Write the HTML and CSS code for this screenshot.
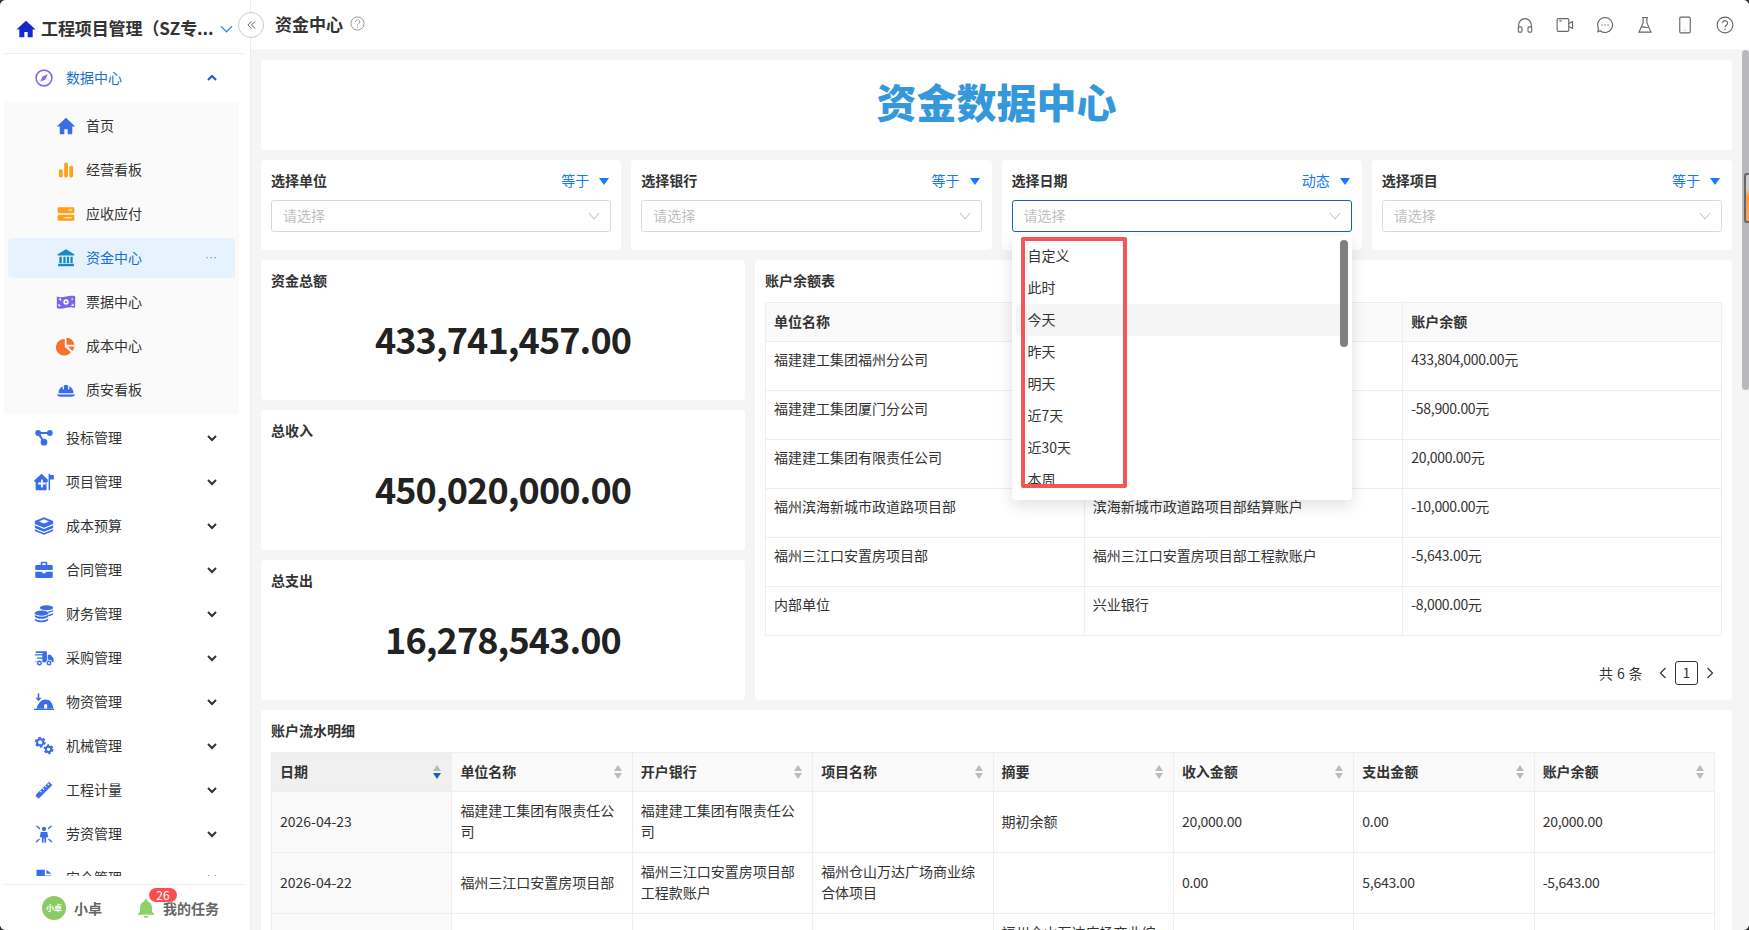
FILE: index.html
```html
<!DOCTYPE html>
<html>
<head>
<meta charset="UTF-8">
<title>资金中心</title>
<link rel="stylesheet" href="styles.css">
</head>
<body>
<div class="app">
	<aside class="sidebar">
		<div class="side-head">
			<svg class="side-logo" viewBox="0 0 24 24"><path d="M12 2 0.500 12.500H4V22h6v-6.500h4V22h6v-9.500h3.500z"/></svg>
			<span class="side-title">工程项目管理（SZ专...</span>
			<svg class="side-down" viewBox="0 0 14 8"><path d="M1 1l6 6 6-6"/></svg>
		</div>
		<nav class="menu">
			<div class="menu-row open">
				<svg class="m-icon" viewBox="0 0 24 24" style="color:#8a6ce6"><circle cx="12" cy="12" r="9.500" fill="none" stroke="currentColor" stroke-width="2"/><path d="M16.500 7.500 13.800 13.800 7.500 16.500 10.200 10.200z"/></svg>
				<span>数据中心</span>
				<svg class="m-chev" viewBox="0 0 12 8"><path d="M2 6l4-4 4 4"/></svg>
			</div>
			<div class="sub-panel">
				<div class="sub-row">
					<svg class="m-icon blue" viewBox="0 0 24 24"><path d="M12 2 1 12.500h3.500V22h5.500v-6h4v6h5.500v-9.500H23z"/></svg>
					<span>首页</span>
				</div>
				<div class="sub-row">
					<svg class="m-icon orange" viewBox="0 0 24 24"><rect x="3.500" y="11" width="4.500" height="10" rx="2"/><rect x="9.800" y="3" width="4.500" height="18" rx="2"/><rect x="16" y="7" width="4.500" height="14" rx="2"/></svg>
					<span>经营看板</span>
				</div>
				<div class="sub-row">
					<svg class="m-icon orange" viewBox="0 0 24 24"><path d="M3.500 4h17A1.500 1.500 0 0 1 22 5.500v4a1.500 1.500 0 0 1-1.500 1.500h-17A1.500 1.500 0 0 1 2 9.500v-4A1.500 1.500 0 0 1 3.500 4zM3.500 13h17a1.500 1.500 0 0 1 1.500 1.500v4a1.500 1.500 0 0 1-1.500 1.500h-17A1.500 1.500 0 0 1 2 18.500v-4A1.500 1.500 0 0 1 3.500 13z"/><path d="M15 7h4M10 16.500h9" stroke="#fff" stroke-width="1.300"/></svg>
					<span>应收应付</span>
				</div>
				<div class="sub-row active">
					<svg class="m-icon" viewBox="0 0 24 24" style="color:#1b8ac4"><path d="M12 1.500 22 7.500v1.500H2V7.500zM4 10.500h3V18H4zM8.800 10.500h2.700V18H8.800zM13 10.500h2.700V18H13zM17.300 10.500H20V18h-2.700zM2.500 19h19v3h-19z"/></svg>
					<span>资金中心</span>
					<span class="more">···</span>
				</div>
				<div class="sub-row">
					<svg class="m-icon" viewBox="0 0 24 24" style="color:#7b66e3"><path d="M1 5.500c4 1.500 7 1 11 0s7-1.500 11-.5v14c-4-1-7-1-11 0s-7 1.500-11 .5z"/><circle cx="12" cy="12" r="3.200" fill="#fff"/><path d="M3.500 8.500h2v2M20.500 8.500h-2M3.500 14.500v2h2M20.500 14v2h-2" fill="none" stroke="#fff" stroke-width="1.300"/><circle cx="12" cy="12" r="1.300"/></svg>
					<span>票据中心</span>
				</div>
				<div class="sub-row">
					<svg class="m-icon" viewBox="0 0 24 24" style="color:#f5712c"><path d="M10.500 3.500V13l7.300 6.600A10 10 0 1 1 10.500 3.500z"/><path d="M12.500 2A9.600 9.600 0 0 1 22 10.500H12.500z"/><path d="M14.500 12.500H22a9.800 9.800 0 0 1-2.500 5.500z"/></svg>
					<span>成本中心</span>
				</div>
				<div class="sub-row">
					<svg class="m-icon blue" viewBox="0 0 24 24"><path d="M3 16c0-4 2-7 5-8.500V11h1.500V6.500c.8-.3 1.700-.5 2.500-.5s1.700.2 2.500.5V11H16V7.500c3 1.500 5 4.500 5 8.500z"/><path d="M1 17.500h22a5 3 0 0 1-4 2.500H5a5 3 0 0 1-4-2.500z"/></svg>
					<span>质安看板</span>
				</div>
			</div>
			<div class="menu-row">
				<svg class="m-icon blue" viewBox="0 0 24 24"><circle cx="5" cy="6" r="3.500"/><circle cx="19" cy="6" r="3.500"/><circle cx="12" cy="17" r="4"/><path d="M5 6h14M5 6l7 11" fill="none" stroke="currentColor" stroke-width="2.500"/></svg>
				<span>投标管理</span>
				<svg class="m-chev" viewBox="0 0 12 8"><path d="M2 2l4 4 4-4"/></svg>
			</div>
			<div class="menu-row">
				<svg class="m-icon blue" viewBox="0 0 24 24"><path d="M9 2 0.500 10v2H2v10h13V12h1.500V9z"/><path d="M8.500 9v3.500H5v2.500h3.500v3.500h2V15H14v-2.500h-3.500V9z" fill="#fff"/><path d="M17.500 2h1.800v1.500h4.500v5.500h-4.500V22h-1.800z"/></svg>
				<span>项目管理</span>
				<svg class="m-chev" viewBox="0 0 12 8"><path d="M2 2l4 4 4-4"/></svg>
			</div>
			<div class="menu-row">
				<svg class="m-icon blue" viewBox="0 0 24 24"><path d="M12 1.500 23 6v3.500L12 14 1 9.500V6z"/><path d="M12 4 6 6.500 12 9l6-2.500z" fill="#fff"/><path d="M1 11l11 4.500L23 11v3.500L12 19 1 14.500zM1 16l11 4.500L23 16v2L12 22.500 1 18z"/></svg>
				<span>成本预算</span>
				<svg class="m-chev" viewBox="0 0 12 8"><path d="M2 2l4 4 4-4"/></svg>
			</div>
			<div class="menu-row">
				<svg class="m-icon blue" viewBox="0 0 24 24"><path d="M8 6V3.500A1.500 1.500 0 0 1 9.500 2h5A1.500 1.500 0 0 1 16 3.500V6h5a1.500 1.500 0 0 1 1.500 1.500V12h-21V7.500A1.500 1.500 0 0 1 3 6zM10 6h4V4h-4zM1.500 14h8.500v2h4v-2h8.500v6a1.500 1.500 0 0 1-1.500 1.500H3A1.500 1.500 0 0 1 1.500 20z"/></svg>
				<span>合同管理</span>
				<svg class="m-chev" viewBox="0 0 12 8"><path d="M2 2l4 4 4-4"/></svg>
			</div>
			<div class="menu-row">
				<svg class="m-icon blue" viewBox="0 0 24 24"><ellipse cx="15" cy="4.500" rx="8" ry="3"/><path d="M17 8.800c2.500-.3 5-1.100 6-2.300v2c-.8 1-3 1.800-6 2.200zM17 12.800c2.500-.3 5-1.100 6-2.300v2c-.8 1-3 1.800-6 2.200z"/><ellipse cx="9" cy="11" rx="8" ry="3.200"/><path d="M1 13c1.500 1.500 4.500 2.300 8 2.300s6.500-.8 8-2.300v2.300c-1 1.500-4.500 2.500-8 2.500s-7-1-8-2.500zM1 17.500c1.500 1.500 4.500 2.300 8 2.300s6.500-.8 8-2.300v2c-1 1.500-4.500 2.500-8 2.500s-7-1-8-2.500z"/></svg>
				<span>财务管理</span>
				<svg class="m-chev" viewBox="0 0 12 8"><path d="M2 2l4 4 4-4"/></svg>
			</div>
			<div class="menu-row">
				<svg class="m-icon blue" viewBox="0 0 24 24"><path d="M2 4h13.500v13H2v-1.500h8V13H3.500v-1.500H10V9H1V7.500h9V6H2zM16.500 8h3.500l3.500 4.500V17h-7z"/><circle cx="6.500" cy="18" r="3.500" stroke="#fff"/><circle cx="18" cy="18" r="3.500" stroke="#fff"/><circle cx="6.500" cy="18" r="1.200" fill="#fff"/><circle cx="18" cy="18" r="1.200" fill="#fff"/></svg>
				<span>采购管理</span>
				<svg class="m-chev" viewBox="0 0 12 8"><path d="M2 2l4 4 4-4"/></svg>
			</div>
			<div class="menu-row">
				<svg class="m-icon blue" viewBox="0 0 24 24"><path d="M3 20c1-5 5-11 11-11s9 6 9 11z"/><path d="M12.200 20v-4.500a2 2 0 0 1 3.600 0V20z" fill="#fff"/><path d="M0 20h24v1.500H0zM4.500 1.500h1.800v5.500h2.700l-3.600 4-3.600-4h2.700z"/></svg>
				<span>物资管理</span>
				<svg class="m-chev" viewBox="0 0 12 8"><path d="M2 2l4 4 4-4"/></svg>
			</div>
			<div class="menu-row">
				<svg class="m-icon blue" viewBox="0 0 24 24"><circle cx="7.500" cy="7.500" r="3.800" fill="none" stroke="currentColor" stroke-width="2.500"/><circle cx="7.500" cy="7.500" r="5.600" fill="none" stroke="currentColor" stroke-width="2" stroke-dasharray="3 2.850"/><circle cx="17.500" cy="16" r="3.300" fill="none" stroke="currentColor" stroke-width="2.500"/><circle cx="17.500" cy="16" r="5" fill="none" stroke="currentColor" stroke-width="2" stroke-dasharray="2.800 2.430"/></svg>
				<span>机械管理</span>
				<svg class="m-chev" viewBox="0 0 12 8"><path d="M2 2l4 4 4-4"/></svg>
			</div>
			<div class="menu-row">
				<svg class="m-icon blue" viewBox="0 0 24 24"><path d="M18 2 22 6 6.500 21.500A1.500 1.500 0 0 1 4.500 21.500L2.500 19.500A1.500 1.500 0 0 1 2.500 17.500z"/><path d="M7.500 13l1.500 1.500M10.500 10l1.500 1.500M13.500 7l1.500 1.500M16.500 4.500 18 6" stroke="#fff" stroke-width="1.300"/></svg>
				<span>工程计量</span>
				<svg class="m-chev" viewBox="0 0 12 8"><path d="M2 2l4 4 4-4"/></svg>
			</div>
			<div class="menu-row">
				<svg class="m-icon blue" viewBox="0 0 24 24"><circle cx="12" cy="6" r="2.600"/><path d="M8 9.500h8l1 6.500h-2.500v6.500h-2V17h-1v5.500h-2V16H7z"/><path d="M3 2l4 4M21 2l-4 4M2.500 22l4-4M21.500 22l-4-4" stroke="currentColor" stroke-width="1.600"/></svg>
				<span>劳资管理</span>
				<svg class="m-chev" viewBox="0 0 12 8"><path d="M2 2l4 4 4-4"/></svg>
			</div>
			<div class="menu-row">
				<svg class="m-icon blue" viewBox="0 0 24 24"><path d="M3 2h10v7h8v13H3zM15 2l6 5h-6z"/></svg>
				<span>安全管理</span>
				<svg class="m-chev" viewBox="0 0 12 8"><path d="M2 2l4 4 4-4"/></svg>
			</div>
		</nav>
		<div class="side-foot">
			<div class="avatar">小卓</div>
			<span class="foot-name">小卓</span>
			<div class="bell-wrap">
				<svg class="bell" viewBox="0 0 24 24"><path d="M12 0a2 2 0 0 1 2 2v1c4 1 6 4.500 6 9v5l3 3v1H1v-1l3-3v-5c0-4.500 2-8 6-9V2a2 2 0 0 1 2-2zM9 22.500h6a3 2.500 0 0 1-6 0z"/></svg>
				<span class="badge">26</span>
			</div>
			<span class="foot-name">我的任务</span>
		</div>
	</aside>
	<button class="collapse" aria-label="收起"><svg viewBox="0 0 10 10"><path d="M5 1 1 5l4 4M9 1 5 5l4 4"/></svg></button>
	<main class="main">
		<header class="topbar">
			<h1>资金中心</h1>
			<svg class="help" viewBox="0 0 24 24"><circle cx="12" cy="12" r="10.500"/><path d="M8.800 9.500a3.300 3.300 0 1 1 5 2.800c-1.200.7-1.800 1.300-1.800 2.700M12 17v1.800"/></svg>
			<div class="tools">
				<svg viewBox="0 0 24 24"><path d="M3.500 15v-3a8.500 8.500 0 0 1 17 0v3"/><rect x="3" y="14.500" width="5" height="7" rx="1.500"/><rect x="16" y="14.500" width="5" height="7" rx="1.500"/></svg>
				<svg viewBox="0 0 24 24"><rect x="1.500" y="3.500" width="15.500" height="17" rx="1.500"/><path d="M17 10l5-2.500v9L17 14M4.500 6.500h3"/></svg>
				<svg viewBox="0 0 24 24"><path d="M12 2a10 10 0 1 1-6.500 17.600L2.500 21l.8-4.500A10 10 0 0 1 12 2z"/><circle class="dot" cx="8" cy="12" r=".9"/><circle class="dot" cx="12" cy="12" r=".9"/><circle class="dot" cx="16" cy="12" r=".9"/></svg>
				<svg viewBox="0 0 24 24"><path d="M8 2h8M9.500 2v7L4 21.500h16L14.500 9V2M7 15c3-2 6 2 10-.5"/></svg>
				<svg viewBox="0 0 24 24"><rect x="5" y="1.500" width="14" height="21" rx="1.500"/><path d="M11.500 19h1"/></svg>
				<svg viewBox="0 0 24 24"><circle cx="12" cy="12" r="10.500"/><path d="M8.800 9.500a3.300 3.300 0 1 1 5 2.800c-1.200.7-1.800 1.300-1.800 2.700M12 17v1.800"/></svg>
			</div>
		</header>
		<div class="body-wrap">
			<div class="content">
				<section class="card banner">资金数据中心</section>
				<section class="filters">
					<div class="card filter">
						<div class="filter-head"><b>选择单位</b><span class="mode">等于</span><i class="tri"></i></div>
						<div class="select"><span>请选择</span><svg viewBox="0 0 12 8"><path d="M1 1l5 6 5-6"/></svg></div>
					</div>
					<div class="card filter">
						<div class="filter-head"><b>选择银行</b><span class="mode">等于</span><i class="tri"></i></div>
						<div class="select"><span>请选择</span><svg viewBox="0 0 12 8"><path d="M1 1l5 6 5-6"/></svg></div>
					</div>
					<div class="card filter">
						<div class="filter-head"><b>选择日期</b><span class="mode">动态</span><i class="tri"></i></div>
						<div class="select focus">
							<span>请选择</span><svg viewBox="0 0 12 8"><path d="M1 1l5 6 5-6"/></svg>
							<div class="dropdown">
								<ul>
									<li>自定义</li>
									<li>此时</li>
									<li class="hover">今天</li>
									<li>昨天</li>
									<li>明天</li>
									<li>近7天</li>
									<li>近30天</li>
									<li>本周</li>
								</ul>
								<div class="drop-thumb"></div>
								<div class="red-box"></div>
							</div>
						</div>
					</div>
					<div class="card filter">
						<div class="filter-head"><b>选择项目</b><span class="mode">等于</span><i class="tri"></i></div>
						<div class="select"><span>请选择</span><svg viewBox="0 0 12 8"><path d="M1 1l5 6 5-6"/></svg></div>
					</div>
				</section>
				<section class="stats">
					<div class="stat-col">
						<div class="card stat"><b>资金总额</b><div class="num">433,741,457.00</div></div>
						<div class="card stat"><b>总收入</b><div class="num">450,020,000.00</div></div>
						<div class="card stat"><b>总支出</b><div class="num">16,278,543.00</div></div>
					</div>
					<div class="card balance">
						<b>账户余额表</b>
						<table class="bal-table">
							<thead>
								<tr><th>单位名称</th><th>账户名称</th><th>账户余额</th></tr>
							</thead>
							<tbody>
								<tr><td>福建建工集团福州分公司</td><td>福建建工集团福州分公司基本户</td><td>433,804,000.00元</td></tr>
								<tr><td>福建建工集团厦门分公司</td><td>福建建工集团厦门分公司基本户</td><td>-58,900.00元</td></tr>
								<tr><td>福建建工集团有限责任公司</td><td>福建建工集团有限责任公司</td><td>20,000.00元</td></tr>
								<tr><td>福州滨海新城市政道路项目部</td><td>滨海新城市政道路项目部结算账户</td><td>-10,000.00元</td></tr>
								<tr><td>福州三江口安置房项目部</td><td>福州三江口安置房项目部工程款账户</td><td>-5,643.00元</td></tr>
								<tr><td>内部单位</td><td>兴业银行</td><td>-8,000.00元</td></tr>
							</tbody>
						</table>
						<div class="pager">
							<span class="total">共 6 条</span>
							<svg viewBox="0 0 8 12"><path d="M6.500 1 1.500 6l5 5"/></svg>
							<span class="page">1</span>
							<svg viewBox="0 0 8 12"><path d="M1.500 1l5 5-5 5"/></svg>
						</div>
					</div>
				</section>
				<section class="card detail">
					<b>账户流水明细</b>
					<table class="flow-table">
						<thead>
							<tr>
								<th class="sorted"><div class="th-in"><span>日期</span><span class="sort on"><i></i><i></i></span></div></th>
								<th><div class="th-in"><span>单位名称</span><span class="sort"><i></i><i></i></span></div></th>
								<th><div class="th-in"><span>开户银行</span><span class="sort"><i></i><i></i></span></div></th>
								<th><div class="th-in"><span>项目名称</span><span class="sort"><i></i><i></i></span></div></th>
								<th><div class="th-in"><span>摘要</span><span class="sort"><i></i><i></i></span></div></th>
								<th><div class="th-in"><span>收入金额</span><span class="sort"><i></i><i></i></span></div></th>
								<th><div class="th-in"><span>支出金额</span><span class="sort"><i></i><i></i></span></div></th>
								<th><div class="th-in"><span>账户余额</span><span class="sort"><i></i><i></i></span></div></th>
							</tr>
						</thead>
						<tbody>
							<tr>
								<td class="sorted">2026-04-23</td>
								<td>福建建工集团有限责任公司</td>
								<td>福建建工集团有限责任公司</td>
								<td></td>
								<td>期初余额</td>
								<td>20,000.00</td>
								<td>0.00</td>
								<td>20,000.00</td>
							</tr>
							<tr>
								<td class="sorted">2026-04-22</td>
								<td>福州三江口安置房项目部</td>
								<td>福州三江口安置房项目部工程款账户</td>
								<td>福州仓山万达广场商业综合体项目</td>
								<td></td>
								<td>0.00</td>
								<td>5,643.00</td>
								<td>-5,643.00</td>
							</tr>
							<tr>
								<td class="sorted"></td>
								<td></td>
								<td></td>
								<td></td>
								<td>福州仓山万达广场商业综合体项目</td>
								<td></td>
								<td></td>
								<td></td>
							</tr>
						</tbody>
					</table>
				</section>
			</div>
			<div class="scrollbar"><div class="thumb"></div></div>
			<div class="side-tab"></div>
		</div>
	</main>
</div>
</body>
</html>
```

FILE: styles.css
```css
*{
	margin: 0;
	padding: 0;
	box-sizing: border-box;
}
html,body{
	height: 100%;
	overflow: hidden;
	background: #333;
}
body{
	font: 14px/22px "Noto Sans CJK SC","Liberation Sans",sans-serif;
	color: #333;
}
b{
	font-weight: 600;
}
.app{
	position: relative;
	display: flex;
	width: 1749px;
	height: 930px;
	background: #f5f5f5;
	border-radius: 6px;
	overflow: hidden;
}

/* 左侧菜单 */
.sidebar{
	display: flex;
	flex-direction: column;
	flex: 0 0 251px;
	background: #fff;
	border-right: 1px solid #ececec;
}
.side-head{
	display: flex;
	align-items: center;
	height: 54px;
	margin: 0 4px;
	padding: 4px 0 0 12px;
	border-bottom: 1px solid #f0f0f0;
}
.side-logo{
	flex: none;
	width: 20px;
	height: 20px;
	fill: #1428c8;
}
.side-title{
	margin: 0 0 2px 5px;
	font-size: 17px;
	font-weight: 700;
	letter-spacing: -.1px;
	color: #333;
	white-space: nowrap;
}
.side-down{
	flex: none;
	width: 13px;
	height: 8px;
	margin-left: auto;
	margin-right: 13px;
	fill: none;
	stroke: #3b8cf0;
	stroke-width: 1.4;
}
.menu{
	flex: 1;
	overflow: hidden;
	margin-bottom: 8px;
}
.menu-row{
	display: flex;
	align-items: center;
	gap: 12px;
	height: 40px;
	margin-bottom: 4px;
	padding-left: 34px;
}
.menu-row.open{
	height: 48px;
	margin-bottom: 0;
	color: #1a6fd0;
}
.menu-row span,.sub-row span{
	margin-bottom: 2px;
}
.m-icon{
	flex: none;
	width: 20px;
	height: 20px;
	fill: currentColor;
}
.blue{
	color: #3a6ee8;
}
.orange{
	color: #ff9f1a;
}
.m-chev{
	flex: none;
	width: 12px;
	height: 8px;
	margin-left: auto;
	margin-right: 32px;
	fill: none;
	stroke: #333;
	stroke-width: 2;
}
.open .m-chev{
	stroke: #1a5fc0;
}
.sub-panel{
	display: flex;
	flex-direction: column;
	gap: 4px;
	width: 235px;
	margin: 0 0 4px 4px;
	padding: 4px;
	background: #fafafa;
}
.sub-row{
	display: flex;
	align-items: center;
	gap: 10px;
	height: 40px;
	padding-left: 48px;
	border-radius: 4px;
}
.sub-row.active{
	background: #e6f3fe;
	color: #1a6fd0;
}
.sub-row .more{
	margin-left: auto;
	margin-right: 18px;
	color: #4a9be8;
	font: 12px/20px "Liberation Sans",sans-serif;
}
.side-foot{
	display: flex;
	align-items: center;
	flex: 0 0 46px;
	margin: 0 4px;
	padding-left: 38px;
	border-top: 1px solid #f0f0f0;
}
.avatar{
	width: 24px;
	height: 24px;
	border-radius: 50%;
	background: #8acb64;
	color: #fff;
	font-size: 8px;
	font-weight: 700;
	line-height: 24px;
	text-align: center;
}
.foot-name{
	margin-left: 8px;
	font-weight: 700;
	line-height: 16px;
	color: #666;
}
.bell-wrap{
	position: relative;
	width: 18px;
	height: 20px;
	margin-left: 35px;
}
.bell{
	width: 18px;
	height: 20px;
	fill: #8ed06a;
}
.badge{
	position: absolute;
	top: -10px;
	left: 12px;
	width: 28px;
	height: 14px;
	border-radius: 7px;
	background: #ff4d4f;
	color: #fff;
	font-size: 12px;
	line-height: 14px;
	text-align: center;
}
.collapse{
	position: absolute;
	top: 12px;
	left: 238px;
	display: flex;
	align-items: center;
	justify-content: center;
	width: 26px;
	height: 26px;
	border: 1px solid #ccc;
	border-radius: 50%;
	background: #fff;
}
.collapse svg{
	width: 9px;
	height: 10px;
	fill: none;
	stroke: #555;
	stroke-width: 1;
}

/* 右侧 */
.main{
	display: flex;
	flex-direction: column;
	flex: 1;
	min-width: 0;
}
.topbar{
	display: flex;
	align-items: center;
	flex: 0 0 49px;
	padding: 0 15px 0 24px;
	background: #fff;
}
.topbar h1{
	margin-bottom: 2px;
	font-size: 17px;
	font-weight: 700;
	color: #333;
}
.help{
	width: 15px;
	height: 15px;
	margin: 0 0 3px 7px;
	fill: none;
	stroke: #999;
	stroke-width: 1.6;
}
.tools{
	display: flex;
	gap: 22px;
	margin-left: auto;
}
.tools svg{
	width: 18px;
	height: 18px;
	fill: none;
	stroke: #666;
	stroke-width: 1.5;
}
.tools .dot{
	fill: #666;
	stroke: none;
}
.body-wrap{
	position: relative;
	display: flex;
	flex: 1;
	min-height: 0;
	overflow: hidden;
}
.content{
	display: flex;
	flex-direction: column;
	gap: 10px;
	flex: 1;
	min-width: 0;
	padding: 11px 10px 0;
}
.scrollbar{
	flex: 0 0 7px;
	padding-top: 1px;
	background: #f5f5f5;
}
.thumb{
	height: 340px;
	border-radius: 4px;
	background: #b9b9bd;
}
.side-tab{
	position: absolute;
	top: 124px;
	right: 0;
	width: 5px;
	height: 50px;
	border: 2px solid #666;
	border-right: 0;
	border-radius: 3px 0 0 3px;
	background: linear-gradient(#ccc 30%,#ff9a3c 50%,#ffa55a);
}
.card{
	background: #fff;
	border-radius: 4px;
}
.banner{
	flex: 0 0 90px;
	color: #3498db;
	font-size: 40px;
	font-weight: 900;
	line-height: 82px;
	text-align: center;
}
.filters{
	display: grid;
	grid-template-columns: repeat(4,1fr);
	gap: 10px;
	flex: none;
}
.filter{
	height: 90px;
	padding: 10px;
}
.filter-head{
	display: flex;
	align-items: center;
	height: 22px;
	margin-bottom: 8px;
}
.filter-head b,.filter-head .mode,.select > span{
	margin-bottom: 2px;
}
.mode{
	margin-left: auto;
	color: #1677ff;
}
.tri{
	width: 0;
	height: 0;
	margin: 0 2px 0 10px;
	border-top: 7px solid #1677ff;
	border-left: 5px solid transparent;
	border-right: 5px solid transparent;
}
.select{
	position: relative;
	display: flex;
	align-items: center;
	justify-content: space-between;
	height: 32px;
	padding: 0 10px 0 11px;
	border: 1px solid #d9d9d9;
	border-radius: 3px;
	color: #bfbfbf;
}
.select svg{
	width: 12px;
	height: 8px;
	fill: none;
	stroke: #bbb;
}
.select.focus{
	border-color: #1a5fc0;
}
.dropdown{
	position: absolute;
	top: 35px;
	left: -1px;
	z-index: 5;
	width: 340px;
	height: 264px;
	padding: 4px;
	border-radius: 4px;
	background: #fff;
	box-shadow: 0 6px 16px rgba(0,0,0,.12);
}
.dropdown ul{
	height: 256px;
	overflow: hidden;
	list-style: none;
}
.dropdown li{
	height: 32px;
	padding-left: 12px;
	color: #333;
	line-height: 30px;
	border-radius: 4px;
}
.dropdown li.hover{
	background: #f5f5f5;
}
.drop-thumb{
	position: absolute;
	top: 4px;
	right: 4px;
	width: 8px;
	height: 107px;
	border-radius: 4px;
	background: #808080;
}
.red-box{
	position: absolute;
	top: 1px;
	left: 9px;
	width: 106px;
	height: 251px;
	border: 4px solid #f55555;
	border-radius: 2px;
}
.stats{
	display: grid;
	grid-template-columns: 484px 1fr;
	gap: 10px;
	flex: none;
}
.stat-col{
	display: flex;
	flex-direction: column;
	gap: 10px;
}
.stat{
	height: 140px;
	padding: 10px;
}
.stat b,.balance b,.detail b{
	display: block;
	height: 22px;
	line-height: 20px;
}
.num{
	margin-top: 22px;
	color: #222;
	font-size: 36px;
	font-weight: 700;
	letter-spacing: -.9px;
	line-height: 48px;
	text-align: center;
}
.balance{
	padding: 10px;
}
table{
	width: 100%;
	border-collapse: collapse;
	table-layout: fixed;
}
th,td{
	border: 1px solid #eee;
	padding: 8px;
	text-align: left;
}
th{
	background: #fafafa;
	font-weight: 600;
}
.bal-table{
	margin-top: 10px;
}
.bal-table th{
	height: 39px;
	padding: 0 8px 3px;
}
.bal-table td{
	height: 49px;
	padding: 6px 8px 20px;
	vertical-align: top;
}
.bal-table td:last-child{
	letter-spacing: -.3px;
}
.pager{
	display: flex;
	align-items: center;
	justify-content: flex-end;
	gap: 8px;
	height: 24px;
	margin: 25px 8px 0 0;
}
.pager svg{
	width: 8px;
	height: 12px;
	fill: none;
	stroke: #333;
	stroke-width: 1.2;
}
.total{
	margin-right: 8px;
	letter-spacing: .4px;
}
.page{
	width: 23px;
	height: 24px;
	border: 1px solid #333;
	border-radius: 3px;
	line-height: 20px;
	text-align: center;
}
.detail{
	flex: none;
	padding: 10px;
	height: 300px;
	overflow: hidden;
}
.flow-table{
	width: 1444px;
	margin-top: 10px;
}
.flow-table th{
	height: 39px;
	padding: 0 10px 0 8px;
}
.flow-table td{
	padding: 8px 8px 10px;
	line-height: 21px;
}
.flow-table td:nth-child(n+6){
	letter-spacing: -.25px;
}
.th-in{
	display: flex;
	align-items: center;
	justify-content: space-between;
}
.th-in > span:first-child{
	margin-bottom: 2px;
}
.sort{
	display: flex;
	flex-direction: column;
	gap: 2px;
}
.sort i{
	width: 0;
	height: 0;
	border-left: 4px solid transparent;
	border-right: 4px solid transparent;
	border-bottom: 6px solid #bbb;
}
.sort i + i{
	border-bottom: 0;
	border-top: 6px solid #bbb;
}
.sort.on i + i{
	border-top-color: #1a5fc0;
}
th.sorted{
	background: #f0f0f0;
}
td.sorted{
	background: #fafafa;
}
```
